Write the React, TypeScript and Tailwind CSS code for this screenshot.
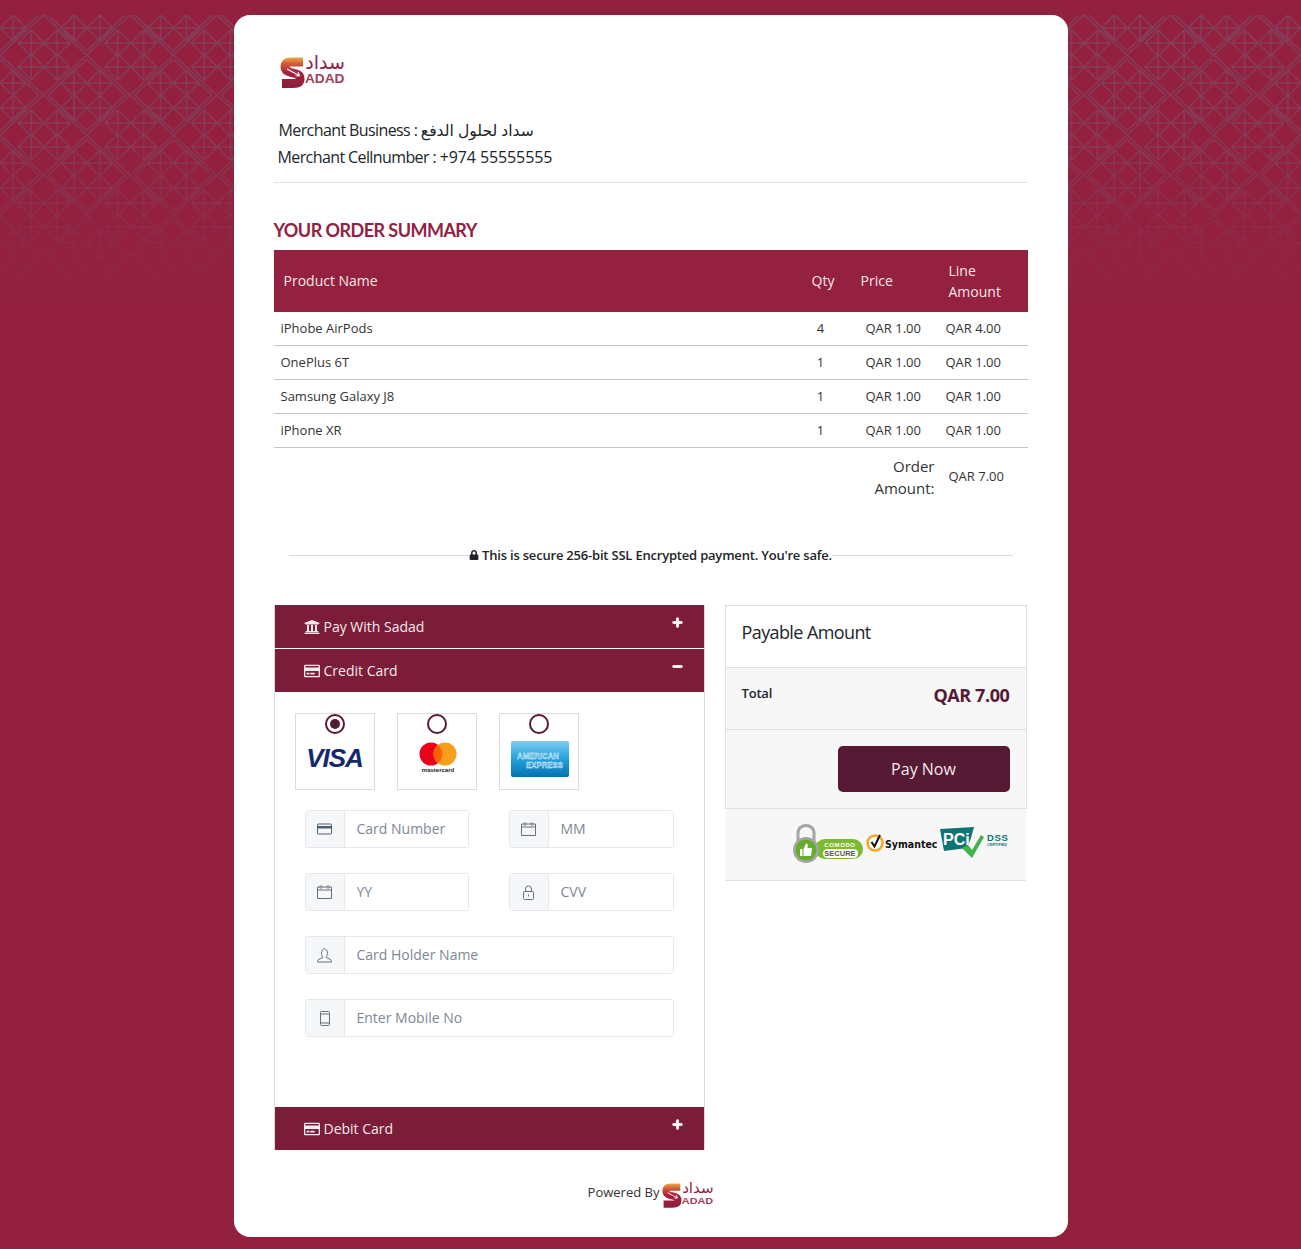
import { FaLock, FaMinus, FaPlus, FaRegCreditCard, FaUniversity } from "react-icons/fa";
import type { ReactNode } from "react";

const rows = [
  { name: "iPhobe AirPods", qty: "4", price: "QAR 1.00", amount: "QAR 4.00" },
  { name: "OnePlus 6T", qty: "1", price: "QAR 1.00", amount: "QAR 1.00" },
  { name: "Samsung Galaxy J8", qty: "1", price: "QAR 1.00", amount: "QAR 1.00" },
  { name: "iPhone XR", qty: "1", price: "QAR 1.00", amount: "QAR 1.00" },
];

function BackgroundPattern() {
  const diamonds = [
    [13, 13],
    [74, 13],
    [31, 28],
    [57, 28],
    [31, 52],
    [57, 52],
    [13, 68],
    [74, 68],
  ];
  return (
    <svg className="absolute left-0 top-[15px] h-[290px] w-full" aria-hidden="true">
      <defs>
        <pattern id="tile" width="86.7" height="80" patternUnits="userSpaceOnUse">
          <g fill="none" stroke="#7d4c68" strokeWidth="1.5">
            <path d="M43.35 0L86.7 40L43.35 80L0 40Z" />
            <path d="M48 0L86.7 35.7M38.7 0L0 35.7M48 80L86.7 44.3M38.7 80L0 44.3" />
            {diamonds.map(([x, y]) => (
              <path key={`${x}-${y}`} d={`M${x - 13} ${y}L${x} ${y - 13}L${x + 13} ${y}L${x} ${y + 13}ZM${x - 13} ${y}H${x + 13}M${x} ${y - 13}V${y + 13}`} />
            ))}
          </g>
        </pattern>
        <linearGradient id="fade" x1="0" y1="0" x2="0" y2="1">
          <stop offset="0" stopColor="#fff" stopOpacity="0.7" />
          <stop offset="0.45" stopColor="#fff" stopOpacity="0.6" />
          <stop offset="0.75" stopColor="#fff" stopOpacity="0.25" />
          <stop offset="1" stopColor="#fff" stopOpacity="0" />
        </linearGradient>
        <mask id="fadeMask">
          <rect width="100%" height="100%" fill="url(#fade)" />
        </mask>
      </defs>
      <rect width="100%" height="100%" fill="url(#tile)" mask="url(#fadeMask)" />
    </svg>
  );
}

function SadadLogo({ width, id }: { width: number; id: string }) {
  return (
    <svg viewBox="0 -6 68 41" width={width} height={(width * 41) / 68} className="block">
      <defs>
        <linearGradient id={id} gradientUnits="userSpaceOnUse" x1="0" y1="3" x2="0" y2="34">
          <stop offset="0" stopColor="#f0b040" />
          <stop offset="0.22" stopColor="#d05a3a" />
          <stop offset="0.5" stopColor="#a81f3e" />
          <stop offset="1" stopColor="#8b1d3c" />
        </linearGradient>
      </defs>
      <path
        d="M23 8H11C6.5 8 5 10 5 13C5 16 7 17.5 11 18.5L15 19.5C19 20.5 20 22 20 24.5C20 28 18 29.5 13 29.5H2"
        fill="none"
        stroke={`url(#${id})`}
        strokeWidth="9"
      />
      <path d="M7 15L19 21.5M15.5 22L19.5 21.7L18 18" fill="none" stroke="#fff" strokeWidth="1.1" />
      <text x="65" y="15" textAnchor="end" fontSize="19" fill="#93213f" fontFamily="'DejaVu Sans', sans-serif">سداد</text>
      <text x="25" y="29" fontSize="12.5" fontWeight="700" fill="#a33f5a" fontFamily="'Liberation Sans', sans-serif" textLength="39.5" lengthAdjust="spacingAndGlyphs">ADAD</text>
    </svg>
  );
}

function Radio({ checked }: { checked?: boolean }) {
  return (
    <span className="mx-auto flex h-5 w-5 items-center justify-center rounded-full border-2 border-[#561a34]">
      {checked && <span className="h-2.5 w-2.5 rounded-full bg-[#561a34]" />}
    </span>
  );
}

function CardOption({ checked, children }: { checked?: boolean; children: ReactNode }) {
  return (
    <div className="flex h-[77px] w-[80px] flex-col border border-[#dcdcdc]">
      <Radio checked={checked} />
      <div className="flex flex-1 items-start justify-center">{children}</div>
    </div>
  );
}

function CardIcon() {
  return (
    <svg width="15" height="12" viewBox="0 0 15 12" fill="none">
      <rect x="0.5" y="1" width="14" height="10" rx="1" stroke="#4e5f73" />
      <rect x="0.5" y="3" width="14" height="2.5" fill="#4e5f73" />
    </svg>
  );
}

function CalendarIcon() {
  return (
    <svg width="15" height="14" viewBox="0 0 15 14" fill="none" stroke="#66717f">
      <path d="M0.5 2H14.5V13.5H0.5ZM0.5 5H14.5" />
      <circle cx="4" cy="2" r="1.2" fill="#fff" />
      <circle cx="11" cy="2" r="1.2" fill="#fff" />
    </svg>
  );
}

function LockIcon() {
  return (
    <svg width="11" height="15" viewBox="0 0 11 15" fill="none" stroke="#66717f">
      <path d="M2.5 6.5V4a3 3 0 0 1 6 0V6.5" />
      <rect x="0.5" y="6.5" width="10" height="8" rx="1" />
      <path d="M5.5 9.5V11.5" />
    </svg>
  );
}

function UserIcon() {
  return (
    <svg width="15" height="15" viewBox="0 0 15 15" fill="none" stroke="#66717f">
      <path d="M4.5 5.5C4.5 2.5 5.8 0.8 7.5 0.8S10.5 2.5 10.5 5.5C10.5 7.5 9.2 8.2 9.2 9.5L13.5 11.5C14.2 12 14.5 12.8 14.5 14H0.5C0.5 12.8 0.8 12 1.5 11.5L5.8 9.5C5.8 8.2 4.5 7.5 4.5 5.5Z" />
    </svg>
  );
}

function MobileIcon() {
  return (
    <svg width="10" height="15" viewBox="0 0 10 15" fill="none" stroke="#66717f">
      <rect x="0.5" y="0.5" width="9" height="14" rx="1" />
      <path d="M0.5 3H9.5M0.5 12H9.5" />
    </svg>
  );
}

function Field({ icon, placeholder, wide }: { icon: ReactNode; placeholder: string; wide?: boolean }) {
  return (
    <div className={`flex h-[38px] rounded-[3px] border border-[#e6e8ec] ${wide ? "col-span-2" : ""}`}>
      <span className="flex w-[39px] shrink-0 items-center justify-center border-r border-[#e6e8ec] bg-[#f6f7f9]">
        {icon}
      </span>
      <input
        placeholder={placeholder}
        className="w-full min-w-0 bg-white pb-[2px] pl-3 text-[14px] outline-none placeholder:text-[#7d8896]"
      />
    </div>
  );
}

function AccordionHead({ icon, title, open, divider }: { icon: ReactNode; title: string; open?: boolean; divider?: boolean }) {
  return (
    <div className={`relative flex h-[43px] items-center gap-[4px] bg-[#7b1c38] pl-[29px] text-[14px] text-[#f6e9ee] ${divider ? "mb-px" : ""}`}>
      {icon}
      <span>{title}</span>
      <span className="absolute right-[21px] top-[12px] text-white">
        {open ? <FaMinus size={11} stroke="currentColor" strokeWidth={40} /> : <FaPlus size={11} stroke="currentColor" strokeWidth={40} />}
      </span>
    </div>
  );
}

function SecurityBadges() {
  return (
    <div className="flex items-start justify-end gap-[3px] pr-[15px] pt-[15px]">
      <svg width="72" height="42" viewBox="0 0 72 42">
        <path d="M7 18V9C7 -1 23 -1 23 9V18" fill="none" stroke="#a5a5a5" strokeWidth="3" />
        <rect x="24" y="15" width="48" height="20" rx="10" fill="#7dbb2e" />
        <rect x="32" y="25" width="35" height="9" rx="4.5" fill="#fff" />
        <circle cx="15" cy="26" r="13" fill="#a5a5a5" />
        <circle cx="15" cy="26" r="10.5" fill="#63ad2b" />
        <path d="M9 25H11.5V32H9ZM12.5 25L15 19.5C17 19.5 17 21.5 16.5 24H21L20 32H12.5Z" fill="#fff" />
        <text x="49" y="22.5" textAnchor="middle" fontSize="6" fontWeight="700" fill="#fff" fontFamily="'Liberation Sans', sans-serif" letterSpacing="0.6">COMODO</text>
        <text x="49" y="32.3" textAnchor="middle" fontSize="7.5" fontWeight="700" fill="#555" fontFamily="'Liberation Sans', sans-serif">SECURE</text>
      </svg>
      <svg width="71" height="42" viewBox="0 0 71 42">
        <circle cx="9" cy="19" r="7.5" fill="#fff" stroke="#f5a623" strokeWidth="2.5" />
        <path d="M5.5 18L8.5 22.5L14 11" fill="none" stroke="#111" strokeWidth="2" />
        <text x="19" y="24" fontSize="10.5" fontWeight="700" fill="#111" fontFamily="'DejaVu Sans Condensed', 'DejaVu Sans', sans-serif">Symantec</text>
      </svg>
      <svg width="71" height="42" viewBox="0 0 71 42">
        <path d="M0 5L34 3L31 14L27 24L4 27Z" fill="#0f7473" />
        <text x="3" y="21" fontSize="16" fontWeight="700" fill="#fff" fontFamily="'Liberation Sans', sans-serif">PCi</text>
        <path d="M22 24L28 21L32 26L41 11L44 13L32 34Z" fill="#3fb549" />
        <text x="47" y="17" fontSize="9.5" fontWeight="700" fill="#0f7473" fontFamily="'Liberation Sans', sans-serif" letterSpacing="0.6">DSS</text>
        <text x="47" y="21.5" fontSize="3.8" fontWeight="700" fill="#0f7473" fontFamily="'Liberation Sans', sans-serif">CERTIFIED</text>
      </svg>
    </div>
  );
}

export default function App() {
  return (
    <div className="relative flex min-h-[1249px] justify-center bg-[#93203f] pb-3 pt-[15px] font-['Open_Sans','DejaVu_Sans',sans-serif]">
      <BackgroundPattern />
      <div className="relative h-[1222px] w-[834px] rounded-2xl bg-white px-10 pt-[33px] text-[#212529]">
        <div className="pl-[6px]">
          <SadadLogo width={68} id="logoGrad" />
        </div>

        <div className="mt-[28px] border-b border-[#e2e2e2] pb-[11px] pl-[5px] text-[16px] leading-[27px] tracking-[-0.6px]">
          <p>
            Merchant Business : <span className="text-[15.6px]">سداد لحلول الدفع</span>
          </p>
          <p className="-ml-px">
            Merchant Cellnumber : <span className="tracking-[-0.1px]">+974 55555555</span>
          </p>
        </div>

        <h2 className="mt-[36px] font-['Lato',sans-serif] text-[18px] font-bold leading-[22px] tracking-[-0.55px] text-[#93213f]">
          YOUR ORDER SUMMARY
        </h2>

        <div className="mt-[9px] grid h-[62px] grid-cols-[528px_49px_88px_1fr] items-center bg-[#93213f] pb-px pl-[10px] text-[14px] leading-[21px] text-[#f5e6ea]">
          <span>Product Name</span>
          <span>Qty</span>
          <span>Price</span>
          <span className="w-[60px]">Line Amount</span>
        </div>
        {rows.map((row) => (
          <div
            key={row.name}
            className="grid h-[34px] grid-cols-[513px_54px_98px_1fr] items-center border-b border-[#c4c4c4] pl-[7px] text-[13px] text-[#333]"
          >
            <span>{row.name}</span>
            <span className="text-center">{row.qty}</span>
            <span className="pl-[18px]">{row.price}</span>
            <span>{row.amount}</span>
          </div>
        ))}

        <div className="flex items-center justify-end pt-[7px]">
          <p className="w-[70px] text-right text-[15px] leading-[22px] text-[#333]">Order Amount:</p>
          <p className="ml-[14px] w-[79px] text-[13px] text-[#333]">QAR 7.00</p>
        </div>

        <div className="mt-[47px] flex items-center px-[15px]">
          <span className="h-px flex-1 bg-[#dcdcdc]" />
          <p className="flex items-center gap-[3px] text-[13px] font-semibold leading-[18px] tracking-[-0.2px] text-[#212529]">
            <FaLock size={10} />
            This is secure 256-bit SSL Encrypted payment. You're safe.
          </p>
          <span className="h-px flex-1 bg-[#dcdcdc]" />
        </div>

        <div className="mt-[41px] flex items-start gap-5">
          <div className="w-[431px] border-x border-[#dcdcdc]">
            <AccordionHead divider icon={<FaUniversity size={16} />} title="Pay With Sadad" />
            <AccordionHead open icon={<FaRegCreditCard size={16} />} title="Credit Card" />
            <div className="h-[415px] pl-5 pt-[21px]">
              <div className="flex gap-[22px]">
                <CardOption checked>
                  <span className="mt-[10px] font-['Liberation_Sans',sans-serif] text-[26px] font-bold italic leading-[28px] tracking-[-1px] text-[#14286e]">
                    VISA
                  </span>
                </CardOption>
                <CardOption>
                  <svg width="44" height="34" viewBox="0 0 44 34" className="ml-[3px] mt-[8px]">
                    <circle cx="15" cy="12" r="11.5" fill="#eb001b" />
                    <circle cx="29" cy="12" r="11.5" fill="#f79e1b" />
                    <path d="M22 3A11.5 11.5 0 0 1 22 21A11.5 11.5 0 0 1 22 3Z" fill="#ff5f00" />
                    <text x="22" y="30" textAnchor="middle" fontSize="6" fontWeight="700" fill="#222" fontFamily="'Liberation Sans', sans-serif">mastercard</text>
                  </svg>
                </CardOption>
                <CardOption>
                  <svg width="58" height="36" viewBox="0 0 58 36" className="ml-[2px] mt-[7px]">
                    <defs>
                      <linearGradient id="amex" x1="0" y1="0" x2="0" y2="1">
                        <stop offset="0" stopColor="#7fcdf1" />
                        <stop offset="0.45" stopColor="#2aa5dd" />
                        <stop offset="1" stopColor="#0472b4" />
                      </linearGradient>
                    </defs>
                    <rect width="58" height="36" rx="2" fill="url(#amex)" />
                    <text x="6" y="18" fontSize="9" fontWeight="700" fill="#5fb6e4" stroke="#e6f4fb" strokeWidth="0.4" fontFamily="'Liberation Sans', sans-serif" textLength="42" lengthAdjust="spacingAndGlyphs">AMERICAN</text>
                    <text x="15" y="26.5" fontSize="9" fontWeight="700" fill="#5fb6e4" stroke="#e6f4fb" strokeWidth="0.4" fontFamily="'Liberation Sans', sans-serif" textLength="37" lengthAdjust="spacingAndGlyphs">EXPRESS</text>
                  </svg>
                </CardOption>
              </div>
              <div className="ml-[10px] mt-5 grid w-[369px] grid-cols-[164px_165px] gap-x-10 gap-y-[25px]">
                <Field icon={<CardIcon />} placeholder="Card Number" />
                <Field icon={<CalendarIcon />} placeholder="MM" />
                <Field icon={<CalendarIcon />} placeholder="YY" />
                <Field icon={<LockIcon />} placeholder="CVV" />
                <Field wide icon={<UserIcon />} placeholder="Card Holder Name" />
                <Field wide icon={<MobileIcon />} placeholder="Enter Mobile No" />
              </div>
            </div>
            <AccordionHead icon={<FaRegCreditCard size={16} />} title="Debit Card" />
          </div>

          <div className="w-[302px]">
            <div className="border-x border-t border-[#dcdfe3]">
              <div className="flex h-[62px] items-center border-b border-[#dcdfe3] pb-[8px] pl-4 text-[18px] tracking-[-0.6px] text-[#212529]">
                Payable Amount
              </div>
              <div className="flex h-[62px] items-start justify-between border-b border-[#dcdfe3] bg-[#f7f7f7] pl-4 pr-4 pt-[16px]">
                <span className="text-[13px] font-semibold leading-[18px] tracking-[-0.2px]">Total</span>
                <span className="text-[18px] font-bold leading-[22px] tracking-[-0.4px] text-[#561a34]">QAR 7.00</span>
              </div>
              <div className="flex h-[79px] justify-end border-b border-[#dcdfe3] bg-[#f7f7f7] pr-4 pt-4">
                <button className="h-[46px] w-[172px] rounded-[5px] bg-[#561a34] text-[16px] text-[#f5e9ee]">Pay Now</button>
              </div>
            </div>
            <div className="h-[72px] w-[301px] border-b border-[#dcdfe3] bg-[#f7f7f7]">
              <SecurityBadges />
            </div>
          </div>
        </div>

        <div className="mt-[26px] flex items-center justify-center gap-[3px] pl-[3px] text-[13px] text-[#333]">
          <span>Powered By</span>
          <SadadLogo width={54} id="footerGrad" />
        </div>
      </div>
    </div>
  );
}
